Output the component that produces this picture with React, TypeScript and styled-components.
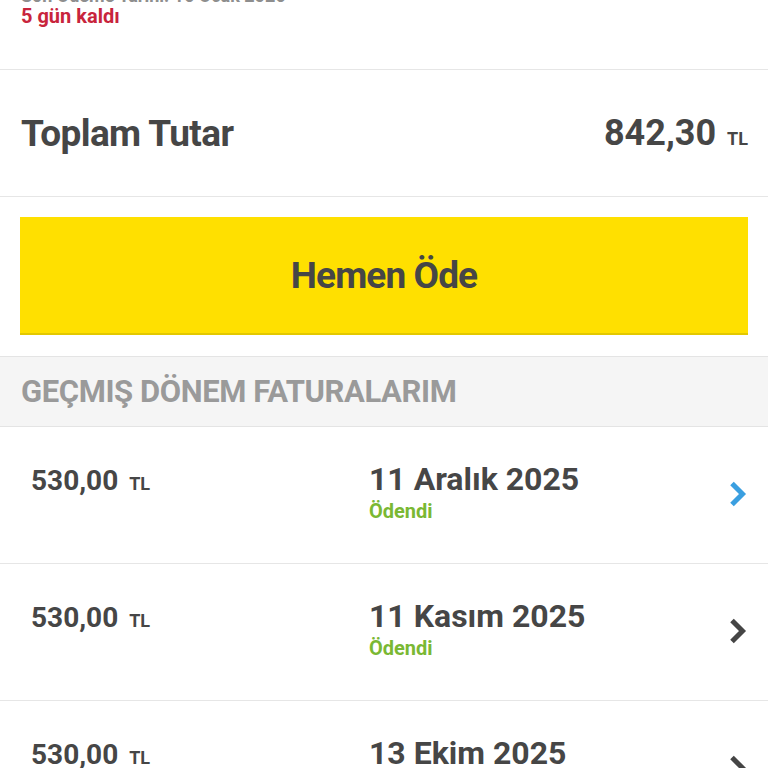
import React from "react";
import styled, { createGlobalStyle } from "styled-components";

const Global = createGlobalStyle`
  html, body { margin: 0; padding: 0; background: #ffffff; }
  body { font-family: Roboto, "Noto Sans", "Liberation Sans", sans-serif; }
  * { box-sizing: border-box; }
`;

const Page = styled.div`
  width: 768px;
  height: 768px;
  overflow: hidden;
  background: #ffffff;
`;

const Scroller = styled.div`
  margin-top: -20px;
  display: flex;
  flex-direction: column;
`;

const DueSection = styled.section`
  padding: 6px 21px 0 21px;
  height: 90px;
  border-bottom: 1px solid #e6e6e6;
  display: flex;
  flex-direction: column;
`;

const DueDate = styled.div`
  font-size: 18px;
  font-weight: 700;
  color: #8e8e8e;
  line-height: 20px;
`;

const Remaining = styled.div`
  font-size: 20px;
  font-weight: 700;
  color: #c8243c;
  line-height: 22px;
  margin-top: -1px;
`;

const TotalRow = styled.section`
  height: 127px;
  padding: 0 20px 0 21px;
  display: flex;
  align-items: center;
  justify-content: space-between;
  border-bottom: 1px solid #e6e6e6;
`;

const TotalLabel = styled.span`
  font-size: 37px;
  font-weight: 700;
  color: #464646;
  letter-spacing: -0.6px;
`;

const Amount = styled.span<{ $size: number }>`
  font-size: ${(p) => p.$size}px;
  font-weight: 700;
  color: #464646;
  display: inline-flex;
  align-items: baseline;
`;

const Currency = styled.span<{ $size: number; $gap: number }>`
  font-size: ${(p) => p.$size}px;
  font-weight: 700;
  margin-left: ${(p) => p.$gap}px;
`;

const ButtonWrap = styled.div`
  padding: 20px 20px 21px 20px;
  border-bottom: 1px solid #e4e4e4;
`;

const PayButton = styled.button`
  width: 100%;
  height: 118px;
  border: none;
  border-bottom: 2px solid #e3c800;
  background: #ffe000;
  color: #464646;
  font-family: Roboto, "Noto Sans", "Liberation Sans", sans-serif;
  font-size: 37px;
  font-weight: 700;
  letter-spacing: -0.9px;
  display: flex;
  align-items: center;
  justify-content: center;
  padding: 0;
`;

const SectionHeader = styled.div`
  height: 70px;
  background: #f5f5f5;
  border-bottom: 1px solid #e4e4e4;
  display: flex;
  align-items: center;
  padding: 0 21px;
  font-size: 31px;
  font-weight: 700;
  color: #9a9a9a;
  letter-spacing: -0.4px;
`;

const InvoiceRow = styled.div`
  height: 137px;
  border-bottom: 1px solid #e6e6e6;
  display: grid;
  grid-template-columns: 338px 1fr 40px;
  padding: 37px 20px 0 31px;
  align-items: start;
`;

const DateCol = styled.div`
  display: flex;
  flex-direction: column;
  margin-top: -4px;
`;

const DateText = styled.span`
  font-size: 32px;
  font-weight: 700;
  color: #464646;
  line-height: 39px;
`;

const Status = styled.span`
  font-size: 20px;
  font-weight: 700;
  color: #7ab833;
  line-height: 24px;
`;

const Chevron = styled.div<{ $color: string }>`
  color: ${(p) => p.$color};
  display: flex;
  justify-content: flex-end;
  margin-top: 17px;
`;

const ChevronIcon = ({ color }: { color: string }) => (
  <Chevron $color={color}>
    <svg width="20" height="26" viewBox="0 0 20 26">
      <path
        d="M4 2.5 L14.5 13 L4 23.5"
        fill="none"
        stroke="currentColor"
        strokeWidth="5"
        strokeLinejoin="miter"
      />
    </svg>
  </Chevron>
);

const invoices = [
  { amount: "530,00", date: "11 Aralık 2025", status: "Ödendi", active: true },
  { amount: "530,00", date: "11 Kasım 2025", status: "Ödendi", active: false },
  { amount: "530,00", date: "13 Ekim 2025", status: "Ödendi", active: false },
];

export default function App() {
  return (
    <Page>
      <Global />
      <Scroller>
        <DueSection>
          <DueDate>Son Ödeme Tarihi: 16 Ocak 2026</DueDate>
          <Remaining>5 gün kaldı</Remaining>
        </DueSection>
        <TotalRow>
          <TotalLabel>Toplam Tutar</TotalLabel>
          <Amount $size={36}>
            842,30
            <Currency $size={18} $gap={11}>TL</Currency>
          </Amount>
        </TotalRow>
        <ButtonWrap>
          <PayButton>Hemen Öde</PayButton>
        </ButtonWrap>
        <SectionHeader>GEÇMIŞ DÖNEM FATURALARIM</SectionHeader>
        {invoices.map((inv, i) => (
          <InvoiceRow key={i}>
            <Amount $size={28}>
              {inv.amount}
              <Currency $size={18} $gap={11}>TL</Currency>
            </Amount>
            <DateCol>
              <DateText>{inv.date}</DateText>
              <Status>{inv.status}</Status>
            </DateCol>
            <ChevronIcon color={inv.active ? "#3a9fe0" : "#454545"} />
          </InvoiceRow>
        ))}
      </Scroller>
    </Page>
  );
}
